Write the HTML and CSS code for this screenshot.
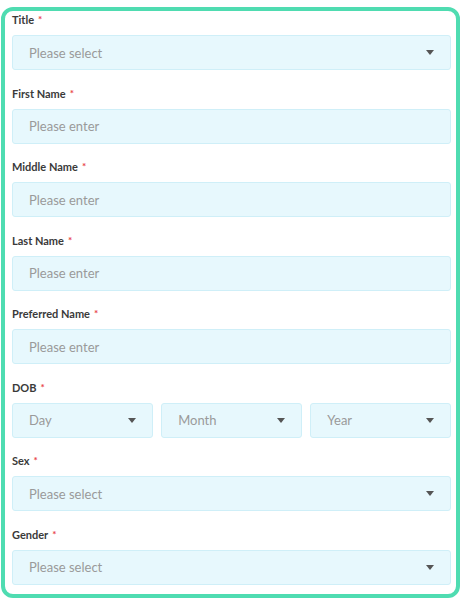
FILE: index.html
```html
<!DOCTYPE html>
<html lang="en">
<head>
<meta charset="utf-8">
<title>Form</title>
<link rel="stylesheet" href="styles.css">
</head>
<body>
<form class="card">
  <div class="field">
    <div class="label">Title<span class="req">*</span></div>
    <div class="control select"><span class="ph">Please select</span><span class="caret"></span></div>
  </div>
  <div class="field">
    <div class="label">First Name<span class="req">*</span></div>
    <div class="control"><span class="ph">Please enter</span></div>
  </div>
  <div class="field">
    <div class="label">Middle Name<span class="req">*</span></div>
    <div class="control"><span class="ph">Please enter</span></div>
  </div>
  <div class="field">
    <div class="label">Last Name<span class="req">*</span></div>
    <div class="control"><span class="ph">Please enter</span></div>
  </div>
  <div class="field">
    <div class="label">Preferred Name<span class="req">*</span></div>
    <div class="control"><span class="ph">Please enter</span></div>
  </div>
  <div class="field">
    <div class="label">DOB<span class="req">*</span></div>
    <div class="dob">
      <div class="control select"><span class="ph">Day</span><span class="caret"></span></div>
      <div class="control select"><span class="ph">Month</span><span class="caret"></span></div>
      <div class="control select"><span class="ph">Year</span><span class="caret"></span></div>
    </div>
  </div>
  <div class="field">
    <div class="label">Sex<span class="req">*</span></div>
    <div class="control select"><span class="ph">Please select</span><span class="caret"></span></div>
  </div>
  <div class="field">
    <div class="label">Gender<span class="req">*</span></div>
    <div class="control select"><span class="ph">Please select</span><span class="caret"></span></div>
  </div>
</form>
</body>
</html>
```
FILE: styles.css
```css
* { box-sizing: border-box; }
html, body { margin: 0; padding: 0; background: #ffffff; }
body { font-family: Lato, "Open Sans", sans-serif; }

.card {
  margin: 7px 4px 0 1px;
  width: 459px;
  border: 4px solid #4fdcb1;
  border-radius: 12px;
  padding: 1px 5px 9.5px 7px;
  background: #fff;
}

.field { margin-bottom: 15.5px; }
.field:last-child { margin-bottom: 0; }

.label {
  font-size: 11px;
  line-height: 16px;
  height: 16px;
  font-weight: 700;
  color: #3a3a3a;
  margin-bottom: 7px;
}
.req {
  color: #e8434a;
  font-size: 10px;
  line-height: 0;
  font-weight: 700;
  margin-left: 4px;
  vertical-align: 1px;
}

.control {
  height: 35px;
  display: flex;
  align-items: center;
  justify-content: space-between;
  padding: 0 16px 0 16px;
  background: #e7f8fd;
  border: 1px solid #cfeff8;
  border-radius: 3px;
}
.ph {
  font-size: 13px;
  color: #9a9a9a;
}
.caret {
  width: 0;
  height: 0;
  border-left: 4.5px solid transparent;
  border-right: 4.5px solid transparent;
  border-top: 5px solid #555555;
}

.dob {
  display: grid;
  grid-template-columns: 1fr 1fr 1fr;
  gap: 8.5px;
}
```
